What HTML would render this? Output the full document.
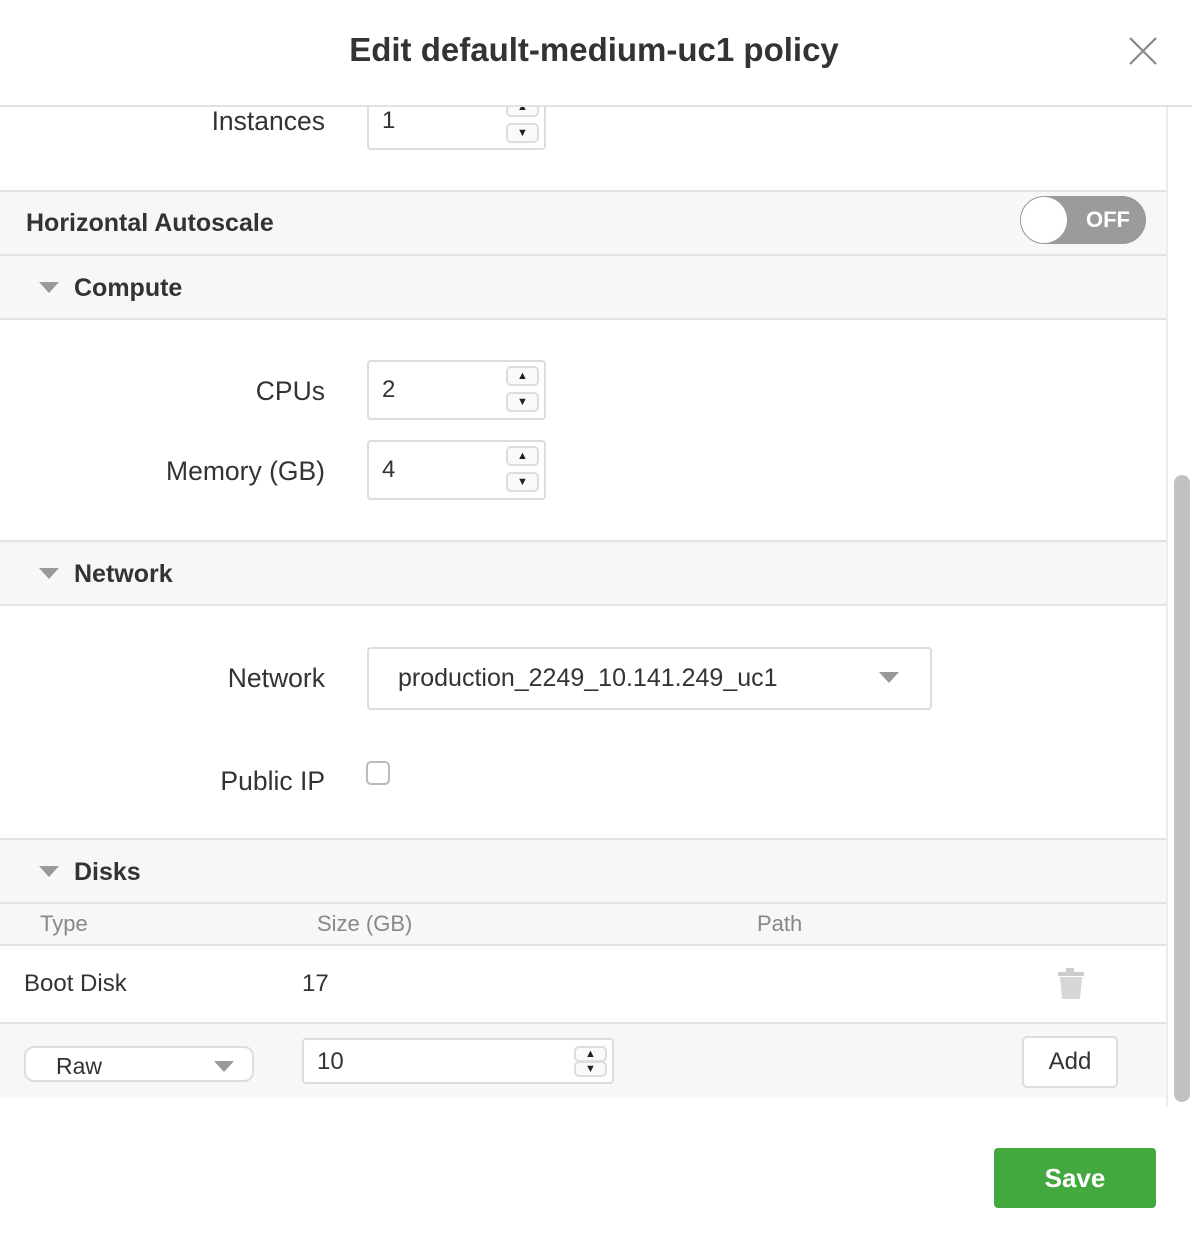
<!DOCTYPE html>
<html><head><meta charset="utf-8"><style>
*{box-sizing:border-box;margin:0;padding:0}
body{width:1192px;height:1244px;background:#fff;position:relative;overflow:hidden;font-family:"Liberation Sans","DejaVu Sans",sans-serif;color:#333}
.a{position:absolute}
.hl{position:absolute;left:0;width:1166px;height:2px;background:#e2e2e2}
.sec{position:absolute;left:0;width:1166px;background:#f7f7f7}
.st{position:absolute;font-weight:bold;font-size:25px;line-height:30px}
.tri{position:absolute;left:39px;width:0;height:0;border-left:10px solid transparent;border-right:10px solid transparent;border-top:11px solid #999}
.lbl{position:absolute;right:867px;font-size:26.5px;line-height:30px;text-align:right;white-space:nowrap}
.inp{position:absolute;border:2px solid #ddd;border-radius:4px;background:#fff;font-size:24px;padding-left:13px}
.sp{position:absolute;width:33px;height:20px;border:2px solid #ddd;border-radius:5px;background:#fafafa;font-size:11px;text-align:center;line-height:16px;color:#222}
</style></head><body>

<!-- instances -->
<div class="lbl" style="top:106px">Instances</div>
<div class="inp" style="left:367px;top:92px;width:179px;height:58px;line-height:54px">1</div>
<div class="sp" style="left:506px;top:97px">▲</div>
<div class="sp" style="left:506px;top:123px">▼</div>
<div class="a" style="left:0;top:0;width:1192px;height:106px;background:#fff"></div>
<div class="a" style="left:0;top:30px;width:1192px;text-align:center;font-size:33px;font-weight:bold;line-height:40px;padding-right:4px">Edit default-medium-uc1 policy</div>
<svg class="a" style="left:1128px;top:36px" width="30" height="30"><path d="M2 2L28 28M28 2L2 28" stroke="#888" stroke-width="2.2"/></svg>
<div class="a" style="left:0;top:105px;width:1192px;height:2px;background:#e2e2e2"></div>

<div class="hl" style="top:190px"></div>
<div class="sec" style="top:192px;height:63px"></div>
<div class="st" style="left:26px;top:208px">Horizontal Autoscale</div>
<div class="a" style="left:1020px;top:196px;width:126px;height:48px;border-radius:24px;background:#9b9b9b;border:1px solid #999"></div>
<div class="a" style="left:1021px;top:197px;width:46px;height:46px;border-radius:50%;background:#fff"></div>
<div class="a" style="left:1086px;top:206px;font-size:22px;font-weight:bold;color:#fff;line-height:28px">OFF</div>

<div class="hl" style="top:254px"></div>
<div class="sec" style="top:256px;height:63px"></div>
<div class="tri" style="top:282px"></div>
<div class="st" style="left:74px;top:273px">Compute</div>
<div class="hl" style="top:318px"></div>

<div class="lbl" style="top:376px">CPUs</div>
<div class="inp" style="left:367px;top:360px;width:179px;height:60px;line-height:56px">2</div>
<div class="sp" style="left:506px;top:366px">▲</div>
<div class="sp" style="left:506px;top:392px">▼</div>
<div class="lbl" style="top:456px">Memory (GB)</div>
<div class="inp" style="left:367px;top:440px;width:179px;height:60px;line-height:56px">4</div>
<div class="sp" style="left:506px;top:446px">▲</div>
<div class="sp" style="left:506px;top:472px">▼</div>

<div class="hl" style="top:540px"></div>
<div class="sec" style="top:542px;height:63px"></div>
<div class="tri" style="top:568px"></div>
<div class="st" style="left:74px;top:559px">Network</div>
<div class="hl" style="top:604px"></div>

<div class="lbl" style="top:663px">Network</div>
<div class="inp" style="left:367px;top:647px;width:565px;height:63px;line-height:59px;padding-left:29px;font-size:25px">production_2249_10.141.249_uc1</div>
<div class="a" style="left:879px;top:672px;border-left:10px solid transparent;border-right:10px solid transparent;border-top:11px solid #999"></div>
<div class="lbl" style="top:766px">Public IP</div>
<div class="a" style="left:366px;top:761px;width:24px;height:24px;border:2px solid #bbb;border-radius:5px;background:#fff"></div>

<div class="hl" style="top:838px"></div>
<div class="sec" style="top:840px;height:63px"></div>
<div class="tri" style="top:866px"></div>
<div class="st" style="left:74px;top:857px">Disks</div>
<div class="hl" style="top:902px"></div>
<div class="sec" style="top:904px;height:41px"></div>
<div class="a" style="left:40px;top:910px;font-size:22px;color:#888;line-height:28px">Type</div>
<div class="a" style="left:317px;top:910px;font-size:22px;color:#888;line-height:28px">Size (GB)</div>
<div class="a" style="left:757px;top:910px;font-size:22px;color:#888;line-height:28px">Path</div>
<div class="hl" style="top:944px"></div>
<div class="a" style="left:24px;top:969px;font-size:24px;line-height:30px">Boot Disk</div>
<div class="a" style="left:302px;top:969px;font-size:24px;line-height:30px">17</div>
<svg class="a" style="left:1056px;top:966px" width="30" height="36"><rect x="10" y="2" width="8" height="4" fill="#ccc"/><rect x="2" y="6" width="26" height="4" rx="1" fill="#ccc"/><path d="M4 11h22l-2 22H6z" fill="#d6d6d6"/></svg>
<div class="hl" style="top:1022px"></div>
<div class="sec" style="top:1024px;height:74px"></div>
<div class="a" style="left:24px;top:1046px;width:230px;height:36px;border:2px solid #ddd;border-radius:10px;background:#fff;font-size:23px;line-height:36px;padding-left:30px">Raw</div>
<div class="a" style="left:214px;top:1061px;border-left:10px solid transparent;border-right:10px solid transparent;border-top:11px solid #999"></div>
<div class="inp" style="left:302px;top:1038px;width:312px;height:46px;line-height:44px">10</div>
<div class="sp" style="left:574px;top:1046px;height:16px;line-height:12px">▲</div>
<div class="sp" style="left:574px;top:1061px;height:16px;line-height:12px">▼</div>
<div class="a" style="left:1022px;top:1036px;width:96px;height:52px;border:2px solid #ddd;border-radius:5px;background:#fff;font-size:24px;line-height:48px;text-align:center">Add</div>

<div class="a" style="left:1166px;top:107px;width:2px;height:1000px;background:#ececec"></div>
<div class="a" style="left:1174px;top:475px;width:16px;height:627px;border-radius:8px;background:#c1c1c1"></div>

<div class="a" style="left:994px;top:1148px;width:162px;height:60px;border-radius:4px;background:#43a83d;color:#fff;font-size:26px;font-weight:bold;text-align:center;line-height:60px">Save</div>
</body></html>
